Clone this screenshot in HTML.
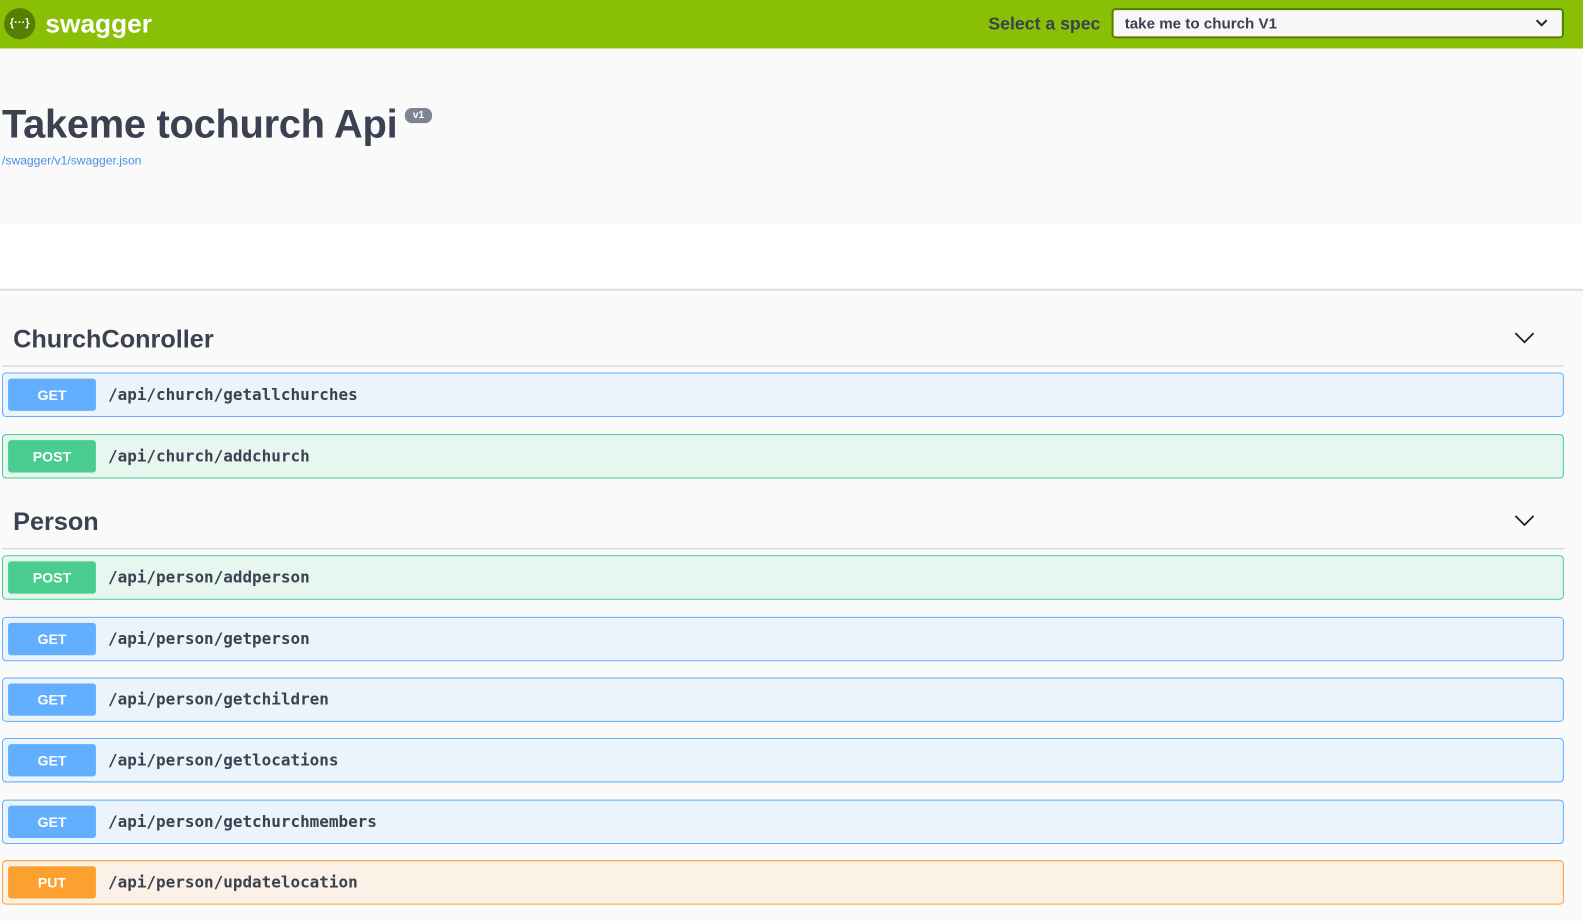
<!DOCTYPE html>
<html><head><meta charset="utf-8"><style>
*{box-sizing:border-box;margin:0;padding:0}
body{width:1583px;height:921px;overflow:hidden;background:#fafafa;font-family:"Liberation Sans",Arial,sans-serif;color:#3b4151;position:relative}
#w{position:absolute;left:0;top:0;width:1568px;height:912px;transform:scale(1.0096);transform-origin:0 0}
.top{position:absolute;left:0;top:0;width:1583px;height:48px;background:#89bf04}
.logo{position:absolute;left:4px;top:8px;width:31px;height:31px;border-radius:50%;background:#547f00;color:#fff;font-size:11px;font-weight:bold;text-align:center;line-height:31px}
.brand{position:absolute;left:45px;top:8px;color:#fff;font-size:26px;font-weight:bold}
.lbl{position:absolute;left:979px;top:13px;font-size:17.5px;font-weight:bold;color:#3b4151}
.sel{position:absolute;left:1101px;top:8px;width:448px;height:30px;border:2px solid #547f00;border-radius:4px;background:#f7f7f7;font-size:15px;font-weight:bold;padding:5px 11px;color:#3b4151}
.sel svg{position:absolute;right:14px;top:9px}
.white{position:absolute;left:0;top:222px;width:1583px;height:66px;background:#fff;border-bottom:2px solid #ddd}
h1{position:absolute;left:2px;top:101px;font-size:39.5px;font-weight:bold;color:#3b4151;letter-spacing:-0.3px}
.v1{position:absolute;left:401px;top:107px;width:27px;height:15px;border-radius:7px;background:#7d8492;color:#fff;font-size:10px;font-weight:bold;text-align:center;line-height:15px}
.url{position:absolute;left:2px;top:152px;font-size:12px;color:#4990e2}
.tag{position:absolute;left:2px;width:1547px;border-bottom:1px solid #ccc;height:50px}
.tag span{position:absolute;left:11px;top:9px;font-size:25px;font-weight:bold}
.tag svg{position:absolute;right:29px;top:16px}
.op{position:absolute;left:2px;width:1547px;height:44px;border:1px solid;border-radius:4px}
.op b{position:absolute;left:5px;top:5px;width:87px;height:32px;border-radius:3px;color:#fff;font-size:14px;text-align:center;line-height:32px}
.op i{position:absolute;left:104px;top:11px;font-style:normal;font-family:"DejaVu Sans Mono","Liberation Mono",monospace;font-weight:bold;font-size:15.8px;color:#3b4151}
.g{background:#ebf3fb;border-color:#61affe}.g b{background:#61affe}
.p{background:#e8f6f0;border-color:#49cc90}.p b{background:#49cc90}
.u{background:#fbf1e6;border-color:#fca130}.u b{background:#fca130}
</style></head><body><div id="w">
<div class="top"><div class="logo">{···}</div><div class="brand">swagger</div>
<div class="lbl">Select a spec</div>
<div class="sel">take me to church V1<svg width="12" height="8" viewBox="0 0 12 8"><path d="M1 1l5 5 5-5" stroke="#222" stroke-width="2" fill="none"/></svg></div></div>
<h1>Takeme tochurch Api</h1><div class="v1">v1</div>
<div class="url">/swagger/v1/swagger.json</div>
<div class="white"></div>
<div class="tag" style="top:313px"><span>ChurchConroller</span><svg width="20" height="12" viewBox="0 0 20 12"><path d="M1 1l9 9 9-9" stroke="#222" stroke-width="1.8" fill="none"/></svg></div>
<div class="op g" style="top:369px"><b>GET</b><i>/api/church/getallchurches</i></div>
<div class="op p" style="top:430px"><b>POST</b><i>/api/church/addchurch</i></div>
<div class="tag" style="top:494px"><span>Person</span><svg width="20" height="12" viewBox="0 0 20 12"><path d="M1 1l9 9 9-9" stroke="#222" stroke-width="1.8" fill="none"/></svg></div>
<div class="op p" style="top:550px"><b>POST</b><i>/api/person/addperson</i></div>
<div class="op g" style="top:611px"><b>GET</b><i>/api/person/getperson</i></div>
<div class="op g" style="top:671px"><b>GET</b><i>/api/person/getchildren</i></div>
<div class="op g" style="top:731px"><b>GET</b><i>/api/person/getlocations</i></div>
<div class="op g" style="top:792px"><b>GET</b><i>/api/person/getchurchmembers</i></div>
<div class="op u" style="top:852px"><b>PUT</b><i>/api/person/updatelocation</i></div>
</div></body></html>
